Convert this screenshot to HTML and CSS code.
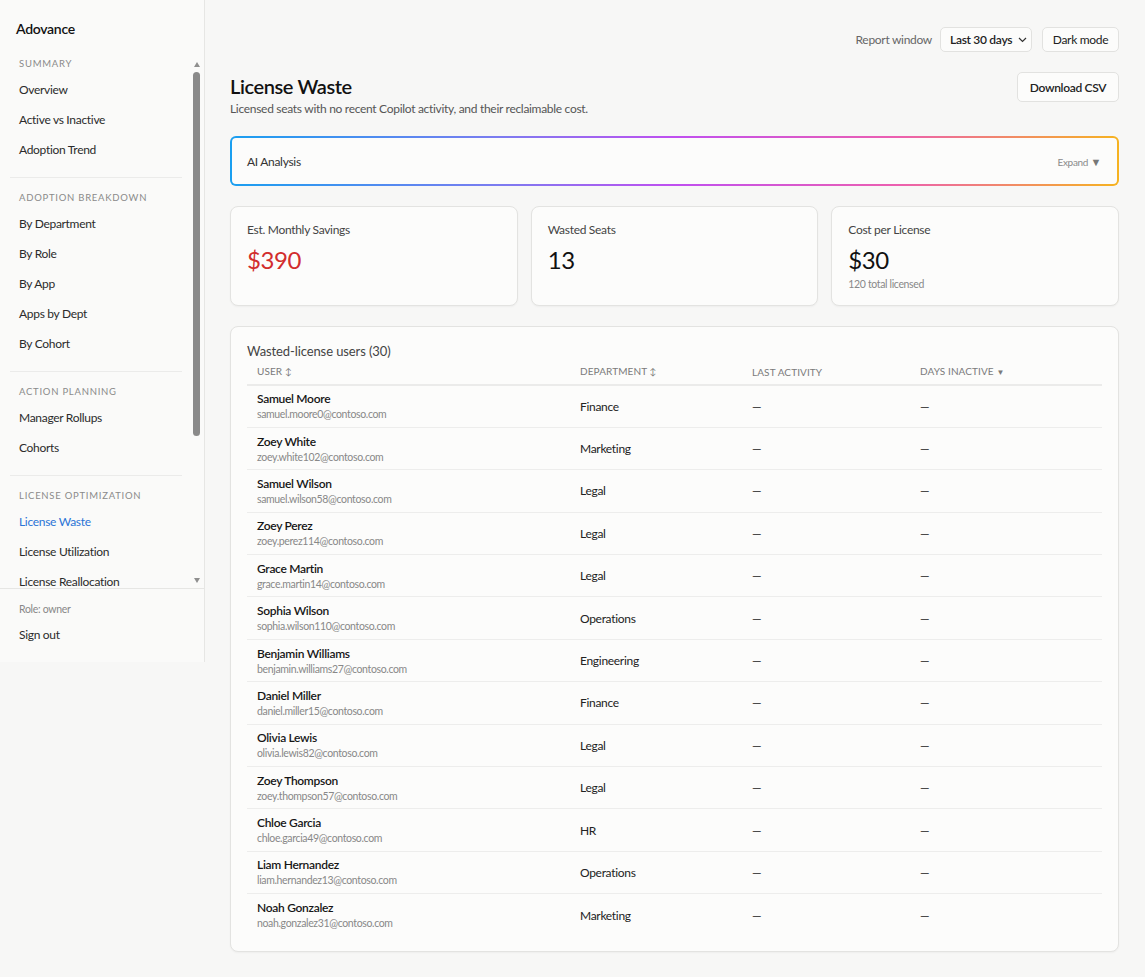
FILE: index.html
```html
<!DOCTYPE html>
<html lang="en">
<head>
<meta charset="utf-8">
<title>License Waste</title>
<link rel="stylesheet" href="styles.css">
</head>
<body>
<div class="app">
  <aside class="sidebar">
    <div class="brand">Adovance</div>
    <div class="nav-wrap">
      <nav class="nav">
        <div class="section">
          <div class="section-label">Summary</div>
          <a class="nav-item">Overview</a>
          <a class="nav-item">Active vs Inactive</a>
          <a class="nav-item">Adoption Trend</a>
        </div>
        <hr class="sep">
        <div class="section">
          <div class="section-label">Adoption Breakdown</div>
          <a class="nav-item">By Department</a>
          <a class="nav-item">By Role</a>
          <a class="nav-item">By App</a>
          <a class="nav-item">Apps by Dept</a>
          <a class="nav-item">By Cohort</a>
        </div>
        <hr class="sep">
        <div class="section">
          <div class="section-label">Action Planning</div>
          <a class="nav-item">Manager Rollups</a>
          <a class="nav-item">Cohorts</a>
        </div>
        <hr class="sep">
        <div class="section">
          <div class="section-label">License Optimization</div>
          <a class="nav-item active">License Waste</a>
          <a class="nav-item">License Utilization</a>
          <a class="nav-item">License Reallocation</a>
        </div>
      </nav>
      <div class="scrollbar" aria-hidden="true">
        <span class="sb-arrow up"></span>
        <span class="sb-thumb"></span>
        <span class="sb-arrow down"></span>
      </div>
    </div>
    <div class="side-footer">
      <div class="role">Role: owner</div>
      <a class="nav-item">Sign out</a>
    </div>
  </aside>

  <main class="main">
    <div class="topbar">
      <span class="topbar-label">Report window</span>
      <div class="select"><span>Last 30 days</span>
        <svg class="chev" width="9" height="6" viewBox="0 0 9 6"><path d="M1 1l3.5 3.5L8 1" fill="none" stroke="#333" stroke-width="1.2"/></svg>
      </div>
      <button class="btn small">Dark mode</button>
    </div>

    <div class="page-head">
      <div>
        <h1 class="title">License Waste</h1>
        <p class="subtitle">Licensed seats with no recent Copilot activity, and their reclaimable cost.</p>
      </div>
      <button class="btn csv">Download CSV</button>
    </div>

    <div class="ai-box">
      <span class="ai-title">AI Analysis</span>
      <span class="ai-expand">Expand <span class="tri">▼</span></span>
    </div>

    <div class="stats">
      <div class="card stat">
        <div class="stat-label">Est. Monthly Savings</div>
        <div class="stat-value red">$390</div>
      </div>
      <div class="card stat">
        <div class="stat-label">Wasted Seats</div>
        <div class="stat-value">13</div>
      </div>
      <div class="card stat">
        <div class="stat-label">Cost per License</div>
        <div class="stat-value">$30</div>
        <div class="stat-note">120 total licensed</div>
      </div>
    </div>

    <div class="card table-card">
      <div class="table-title">Wasted-license users (30)</div>
      <table class="tbl">
        <colgroup>
          <col class="c-user"><col class="c-dept"><col class="c-last"><col class="c-days">
        </colgroup>
        <thead>
          <tr><th>User <span class="sort">↕</span></th><th>Department <span class="sort">↕</span></th><th>Last Activity</th><th>Days Inactive <span class="sort-d">▼</span></th></tr>
        </thead>
        <tbody>
          <tr><td><div class="name">Samuel Moore</div><div class="email">samuel.moore0@contoso.com</div></td><td>Finance</td><td>—</td><td>—</td></tr>
          <tr><td><div class="name">Zoey White</div><div class="email">zoey.white102@contoso.com</div></td><td>Marketing</td><td>—</td><td>—</td></tr>
          <tr><td><div class="name">Samuel Wilson</div><div class="email">samuel.wilson58@contoso.com</div></td><td>Legal</td><td>—</td><td>—</td></tr>
          <tr><td><div class="name">Zoey Perez</div><div class="email">zoey.perez114@contoso.com</div></td><td>Legal</td><td>—</td><td>—</td></tr>
          <tr><td><div class="name">Grace Martin</div><div class="email">grace.martin14@contoso.com</div></td><td>Legal</td><td>—</td><td>—</td></tr>
          <tr><td><div class="name">Sophia Wilson</div><div class="email">sophia.wilson110@contoso.com</div></td><td>Operations</td><td>—</td><td>—</td></tr>
          <tr><td><div class="name">Benjamin Williams</div><div class="email">benjamin.williams27@contoso.com</div></td><td>Engineering</td><td>—</td><td>—</td></tr>
          <tr><td><div class="name">Daniel Miller</div><div class="email">daniel.miller15@contoso.com</div></td><td>Finance</td><td>—</td><td>—</td></tr>
          <tr><td><div class="name">Olivia Lewis</div><div class="email">olivia.lewis82@contoso.com</div></td><td>Legal</td><td>—</td><td>—</td></tr>
          <tr><td><div class="name">Zoey Thompson</div><div class="email">zoey.thompson57@contoso.com</div></td><td>Legal</td><td>—</td><td>—</td></tr>
          <tr><td><div class="name">Chloe Garcia</div><div class="email">chloe.garcia49@contoso.com</div></td><td>HR</td><td>—</td><td>—</td></tr>
          <tr><td><div class="name">Liam Hernandez</div><div class="email">liam.hernandez13@contoso.com</div></td><td>Operations</td><td>—</td><td>—</td></tr>
          <tr class="last"><td><div class="name">Noah Gonzalez</div><div class="email">noah.gonzalez31@contoso.com</div></td><td>Marketing</td><td>—</td><td>—</td></tr>
        </tbody>
      </table>
    </div>
  </main>
</div>
</body>
</html>
```

FILE: styles.css
```css
* { box-sizing: border-box; }
html, body {
  margin: 0;
  padding: 0;
  background: #f7f7f6;
  font-family: Lato, "Open Sans", "Liberation Sans", sans-serif;
  color: #222;
  letter-spacing: -0.3px;
}
.app {
  display: flex;
  align-items: flex-start;
}

/* Sidebar */
.sidebar {
  width: 205px;
  flex: 0 0 205px;
  height: 662px;
  background: #fafaf9;
  border-right: 1px solid #e6e6e4;
  display: flex;
  flex-direction: column;
}
.brand {
  height: 57px;
  padding: 19px 16px 0;
  font-size: 14px;
  font-weight: 600;
  color: #111;
  line-height: 20px;
}
.nav-wrap {
  position: relative;
  height: 531px;
  overflow: hidden;
}
.nav { padding-right: 12px; }
.section-label {
  font-size: 9.5px;
  line-height: 14px;
  letter-spacing: 0.75px;
  text-transform: uppercase;
  color: #8a8a8a;
  padding: 0 19px;
  margin-bottom: 4px;
}
.nav-item {
  display: block;
  height: 30px;
  line-height: 30px;
  padding: 0 19px;
  font-size: 12px;
  color: #2b2b2b;
  white-space: nowrap;
}
.nav-item.active { color: #2a74d6; }
.sep {
  border: 0;
  border-top: 1px solid #ebebea;
  margin: 12px 10px 13px 10px;
  width: 172px;
}
.scrollbar {
  position: absolute;
  top: 0;
  right: 3px;
  width: 9px;
  height: 100%;
  display: flex;
  flex-direction: column;
  align-items: center;
}
.sb-arrow {
  width: 0; height: 0;
  border-left: 3.5px solid transparent;
  border-right: 3.5px solid transparent;
}
.sb-arrow.up { border-bottom: 5px solid #8f8f8f; margin-top: 5px; }
.sb-arrow.down { border-top: 5px solid #8f8f8f; margin-top: auto; margin-bottom: 5px; }
.sb-thumb {
  width: 7px;
  height: 364px;
  margin-top: 5px;
  background: #8a8a8a;
  border-radius: 4px;
}
.side-footer {
  border-top: 1px solid #e6e6e4;
  padding: 12px 0 12px;
}
.role {
  font-size: 10.5px;
  line-height: 16px;
  color: #888;
  padding: 0 19px;
  margin-bottom: 3px;
}

/* Main */
.main {
  flex: 1;
  padding: 27px 26px 20px 25px;
}
.topbar {
  display: flex;
  justify-content: flex-end;
  align-items: center;
  gap: 10px;
  height: 25px;
}
.topbar-label { font-size: 12px; color: #666; margin-right: -2px; }
.select {
  height: 25px;
  width: 92px;
  border: 1px solid #e2e2e0;
  border-radius: 5px;
  background: #fcfcfb;
  font-size: 12px;
  font-weight: 600;
  color: #222;
  display: flex;
  align-items: center;
  justify-content: space-between;
  padding: 0 6px 0 9px;
  white-space: nowrap;
}
.chev { flex: 0 0 9px; margin-left: 6px; }
.btn {
  font-family: inherit;
  letter-spacing: -0.3px;
  background: #fcfcfb;
  border: 1px solid #e2e2e0;
  border-radius: 5px;
  color: #222;
  font-size: 12px;
  cursor: pointer;
  white-space: nowrap;
}
.btn.small { height: 25px; width: 77px; padding: 0; font-weight: 400; }
.btn.csv { height: 30px; width: 102px; padding: 0; font-weight: 600; }

.page-head {
  display: flex;
  justify-content: space-between;
  align-items: flex-start;
  margin-top: 20px;
}
.title {
  margin: 2px 0 0;
  font-size: 20px;
  line-height: 24px;
  font-weight: 600;
  color: #111;
  letter-spacing: -0.4px;
}
.subtitle {
  margin: 3px 0 0;
  font-size: 12px;
  line-height: 16px;
  color: #555;
}

.ai-box {
  margin-top: 19px;
  height: 50px;
  border: 2px solid transparent;
  border-radius: 6px;
  background:
    linear-gradient(#fcfcfb, #fcfcfb) padding-box,
    linear-gradient(90deg, #1a9ff0 0%, #7b7cf0 30%, #c04ff0 50%, #ec5fb0 75%, #f6b320 100%) border-box;
  display: flex;
  align-items: center;
  justify-content: space-between;
  padding: 0 16px 0 15px;
}
.ai-title { font-size: 12px; color: #333; font-weight: 400; }
.ai-expand { font-size: 10px; color: #8a8a8a; }
.ai-expand .tri { color: #777; font-size: 11px; }

.card {
  background: #fcfcfb;
  border: 1px solid #e3e3e1;
  border-radius: 8px;
  box-shadow: 0 1px 2px rgba(0,0,0,0.04);
}
.stats {
  display: grid;
  grid-template-columns: 1fr 1fr 1fr;
  gap: 13px;
  margin-top: 20px;
}
.stat {
  height: 100px;
  padding: 15px 16px;
}
.stat-label { font-size: 12px; line-height: 16px; color: #444; }
.stat-value {
  font-size: 24px;
  line-height: 32px;
  margin-top: 6px;
  color: #111;
  letter-spacing: -0.4px;
}
.stat-value.red { color: #d22d2d; }
.stat-note { font-size: 10.5px; color: #888; line-height: 14px; margin-top: 1px; letter-spacing: -0.35px; }

.table-card {
  margin-top: 20px;
  padding: 16px 16px 15px;
}
.table-title { font-size: 13px; line-height: 16px; color: #444; letter-spacing: -0.1px; }
.tbl {
  width: 100%;
  border-collapse: collapse;
  margin-top: 4px;
  table-layout: fixed;
}
.c-user { width: 323px; }
.c-dept { width: 172px; }
.c-last { width: 168px; }
.tbl th {
  text-align: left;
  font-size: 10px;
  line-height: 14px;
  font-weight: 400;
  letter-spacing: 0.1px;
  text-transform: uppercase;
  color: #7a7a7a;
  padding: 1px 10px 5px;
  border-bottom: 2px solid #ebebea;
  vertical-align: middle;
}
.sort { font-size: 9px; }
.sort-d { font-size: 8px; }
.tbl td {
  padding: 0 10px;
  height: 42.4px;
  border-bottom: 1px solid #ededec;
  font-size: 12px;
  color: #222;
  vertical-align: middle;
}
.tbl tr.last td { border-bottom: 0; }
.name { font-size: 12px; font-weight: 600; color: #161616; line-height: 16px; }
.email { font-size: 10.5px; color: #888; line-height: 14px; letter-spacing: -0.35px; }
```
